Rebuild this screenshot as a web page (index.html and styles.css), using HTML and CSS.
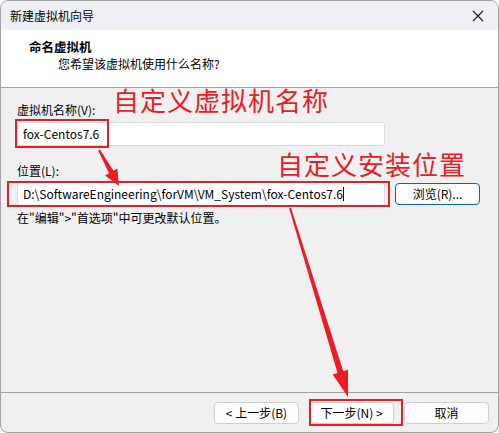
FILE: index.html
```html
<!DOCTYPE html>
<html lang="zh-CN">
<head>
<meta charset="utf-8">
<title>新建虚拟机向导</title>
<link rel="stylesheet" href="styles.css">
</head>
<body>
<div class="window">
  <div class="titlebar">
    <span class="title">新建虚拟机向导</span>
    <svg class="close" width="12" height="12" viewBox="0 0 12 12"><path d="M1 1 L11 11 M11 1 L1 11" stroke="#1a1a1a" stroke-width="1.1" fill="none"/></svg>
  </div>
  <div class="header">
    <div class="h-title">命名虚拟机</div>
    <div class="h-sub">您希望该虚拟机使用什么名称?</div>
  </div>
  <div class="body">
    <div class="label">虚拟机名称(V):</div>
    <div class="input name-input">fox-Centos7.6</div>
    <div class="label label-loc">位置(L):</div>
    <div class="loc-row">
      <div class="input loc-input">D:\SoftwareEngineering\forVM\VM_System\fox-Centos7.6<span class="caret"></span></div>
      <div class="btn browse">浏览(R)...</div>
    </div>
    <div class="hint">在"编辑"&gt;"首选项"中可更改默认位置。</div>
  </div>
  <div class="footer">
    <div class="btn">&lt; 上一步(B)</div>
    <div class="btn">下一步(N) &gt;</div>
    <div class="btn">取消</div>
  </div>

  <div class="anno anno-text anno-name">自定义虚拟机名称</div>
  <div class="anno anno-text anno-loc">自定义安装位置</div>
  <div class="anno box box-name"></div>
  <div class="anno box box-loc"></div>
  <div class="anno box box-next"></div>
  <svg class="anno arrows" width="499" height="433" viewBox="0 0 499 433">
    <polygon fill="#ec1c24" points="99.87,149.51 113.43,170.81 117.36,168.62 119,186 105.12,175.42 109.05,173.23 98.13,150.49"/>
    <polygon fill="#ec1c24" points="290.96,207.71 343.27,371.22 348.05,369.76 348,397 332.75,374.44 337.53,372.98 289.04,208.29"/>
  </svg>
</div>
</body>
</html>
```
FILE: styles.css
```css
html, body {
  margin: 0;
  padding: 0;
  background: #ffffff;
}
body {
  font-family: "Noto Sans CJK SC", "Noto Sans", sans-serif;
  font-size: 12px;
  color: #000;
}
.window {
  position: relative;
  box-sizing: border-box;
  width: 499px;
  height: 433px;
  border: 1px solid #a3a3a3;
  border-radius: 8px;
  overflow: hidden;
  display: flex;
  flex-direction: column;
  background: #f0f0f0;
}
.titlebar {
  height: 29px;
  flex: none;
  background: #eef0f5;
  display: flex;
  align-items: center;
  justify-content: space-between;
  padding: 0 10px 0 9px;
}
.title {
  font-size: 12px;
  line-height: 16px;
}
.close {
  display: block;
  margin-right: 4px;
}
.header {
  height: 57px;
  flex: none;
  background: #fff;
  border-bottom: 1px solid #a0a0a0;
  box-sizing: content-box;
  padding: 0;
}
.h-title {
  font-weight: bold;
  font-size: 12.5px;
  line-height: 16px;
  padding: 9px 0 0 28px;
}
.h-sub {
  line-height: 16px;
  padding: 1px 0 0 57px;
}
.body {
  flex: 1;
  border-bottom: 1px solid #a0a0a0;
  padding: 14px 0 0 16px;
}
.label {
  line-height: 16px;
}
.input {
  box-sizing: border-box;
  width: 368px;
  background: #fff;
  border: 1px solid #dcdcdc;
  border-radius: 3px;
  padding: 0 5px;
  line-height: 20px;
  white-space: nowrap;
}
.name-input {
  height: 24px;
  margin-top: 4px;
  line-height: 22px;
}
.label-loc {
  margin-top: 17px;
}
.loc-row {
  display: flex;
  align-items: flex-start;
  gap: 10px;
  margin-top: 3px;
}
.loc-input {
  height: 25px;
  border-bottom: 2px solid #005fb8;
  line-height: 22px;
}
.caret {
  display: inline-block;
  width: 1px;
  height: 14px;
  background: #000;
  vertical-align: -2px;
}
.btn {
  box-sizing: border-box;
  width: 85px;
  height: 22px;
  background: #fdfdfd;
  border: 1px solid #d0d0d0;
  border-radius: 4px;
  text-align: center;
  line-height: 20px;
}
.browse {
  margin-top: 1px;
  border-color: #0067c0;
}
.hint {
  margin-top: 3px;
  line-height: 16px;
}
.footer {
  height: 39px;
  flex: none;
  display: flex;
  justify-content: flex-end;
  align-items: flex-start;
  gap: 10px;
  padding: 9px 9px 0 0;
  box-sizing: border-box;
}
.anno {
  position: absolute;
}
.anno-text {
  color: #ec1c24;
  font-size: 26px;
  line-height: 30px;
  letter-spacing: 1px;
}
.anno-name {
  left: 112px;
  top: 84px;
}
.anno-loc {
  left: 276px;
  top: 148px;
}
.box {
  border: 2px solid #ec1c24;
  box-sizing: border-box;
}
.box-name {
  left: 14px;
  top: 118px;
  width: 94px;
  height: 29px;
}
.box-loc {
  left: 6px;
  top: 180px;
  width: 383px;
  height: 26px;
}
.box-next {
  left: 308px;
  top: 398px;
  width: 94px;
  height: 27px;
}
.arrows {
  left: -1px;
  top: -1px;
}
```
